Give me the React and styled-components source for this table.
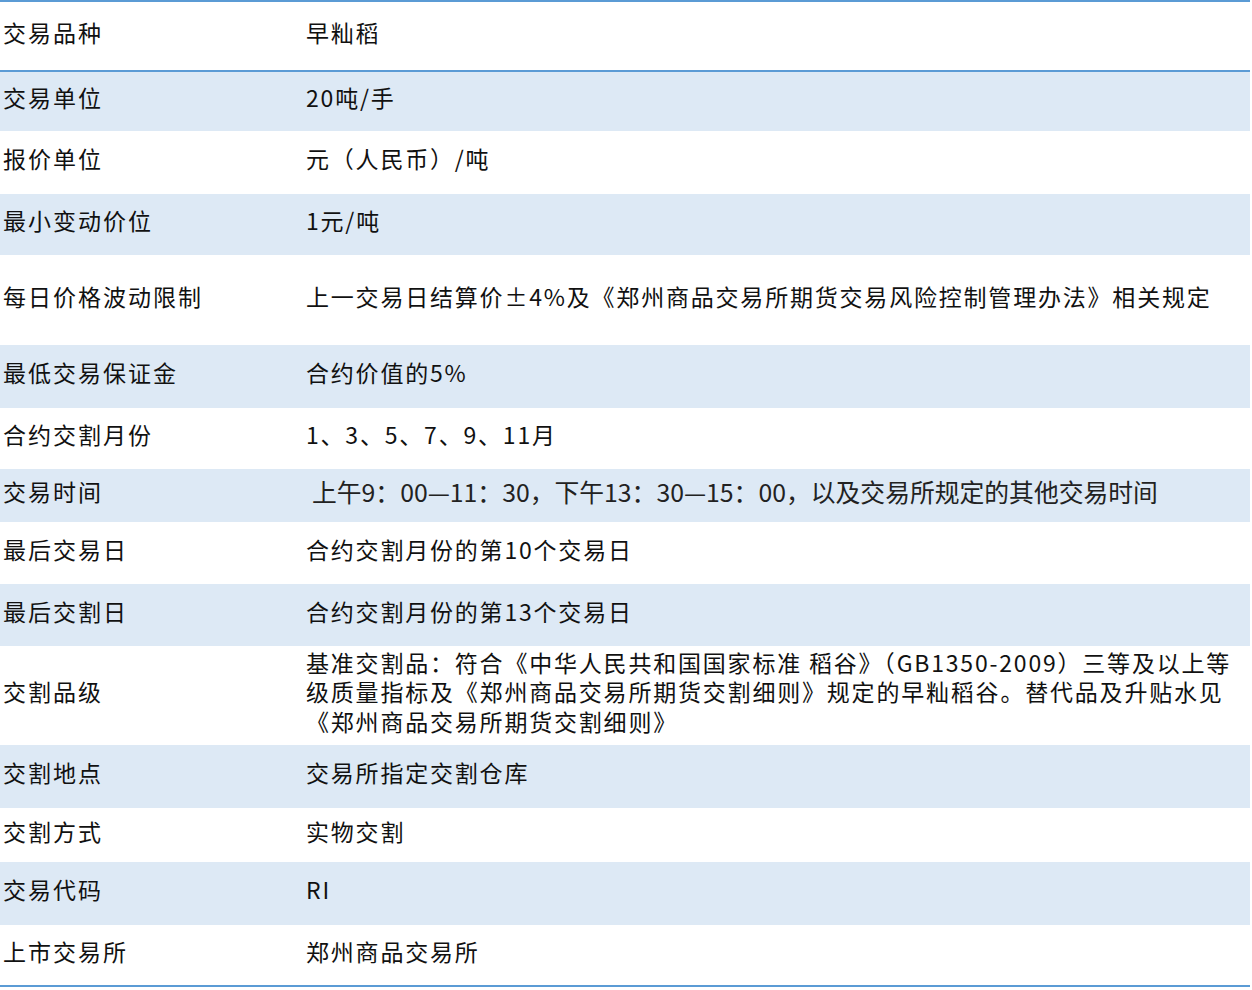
import React from "react";
import styled, { createGlobalStyle } from "styled-components";

const Global = createGlobalStyle`
  html, body { margin: 0; padding: 0; background: #ffffff; }
  body { font-family: "Noto Sans CJK SC", "Noto Sans", sans-serif; }
`;

const Table = styled.section`
  width: 1250px;
  border-top: 2px solid #5b9bd5;
  border-bottom: 2px solid #5b9bd5;
  display: flex;
  flex-direction: column;
`;

const Row = styled.div`
  display: grid;
  grid-template-columns: 306px 1fr;
  align-items: center;
  height: ${(p) => p.$h}px;
  background: ${(p) => (p.$shaded ? "#dde9f5" : "#ffffff")};
  border-bottom: ${(p) => (p.$header ? "2px solid #5b9bd5" : "none")};
  box-sizing: content-box;
`;

const Label = styled.div`
  padding-left: 3px;
  margin-bottom: 8px;
  font-size: 23px;
  letter-spacing: 2px;
  color: #111;
  white-space: nowrap;
  line-height: 1;
`;

const Value = styled.div`
  margin-bottom: ${(p) => (p.$multi ? "7px" : "8px")};
  font-size: ${(p) => (p.$alt ? "24.8px" : "23px")};
  letter-spacing: ${(p) => (p.$alt ? "0" : "1.8px")};
  padding-left: ${(p) => (p.$alt ? "6px" : "0")};
  color: ${(p) => (p.$alt ? "#222" : "#111")};
  white-space: nowrap;
  line-height: ${(p) => (p.$multi ? "29.5px" : "1")};
`;

const Line = styled.span`
  display: block;
`;

const rows = [
  { label: "交易品种", value: "早籼稻", h: 68, header: true },
  { label: "交易单位", value: "20吨/手", h: 59, shaded: true },
  { label: "报价单位", value: "元（人民币）/吨", h: 63 },
  { label: "最小变动价位", value: "1元/吨", h: 61, shaded: true },
  {
    label: "每日价格波动限制",
    value: "上一交易日结算价±4%及《郑州商品交易所期货交易风险控制管理办法》相关规定",
    h: 90,
  },
  { label: "最低交易保证金", value: "合约价值的5%", h: 63, shaded: true },
  { label: "合约交割月份", value: "1、3、5、7、9、11月", h: 61 },
  {
    label: "交易时间",
    value: "上午9：00—11：30，下午13：30—15：00，以及交易所规定的其他交易时间",
    h: 53,
    shaded: true,
    alt: true,
  },
  { label: "最后交易日", value: "合约交割月份的第10个交易日", h: 62 },
  { label: "最后交割日", value: "合约交割月份的第13个交易日", h: 62, shaded: true },
  {
    label: "交割品级",
    lines: [
      "基准交割品：符合《中华人民共和国国家标准 稻谷》（GB1350-2009）三等及以上等",
      "级质量指标及《郑州商品交易所期货交割细则》规定的早籼稻谷。替代品及升贴水见",
      "《郑州商品交易所期货交割细则》",
    ],
    h: 99,
  },
  { label: "交割地点", value: "交易所指定交割仓库", h: 63, shaded: true },
  { label: "交割方式", value: "实物交割", h: 54 },
  { label: "交易代码", value: "RI", h: 63, shaded: true },
  { label: "上市交易所", value: "郑州商品交易所", h: 60 },
];

export default function App() {
  return (
    <>
      <Global />
      <Table>
        {rows.map((r) => (
          <Row key={r.label} $h={r.h} $shaded={r.shaded} $header={r.header}>
            <Label>{r.label}</Label>
            {r.lines ? (
              <Value $multi>
                {r.lines.map((l) => (
                  <Line key={l}>{l}</Line>
                ))}
              </Value>
            ) : (
              <Value $alt={r.alt}>{r.value}</Value>
            )}
          </Row>
        ))}
      </Table>
    </>
  );
}
